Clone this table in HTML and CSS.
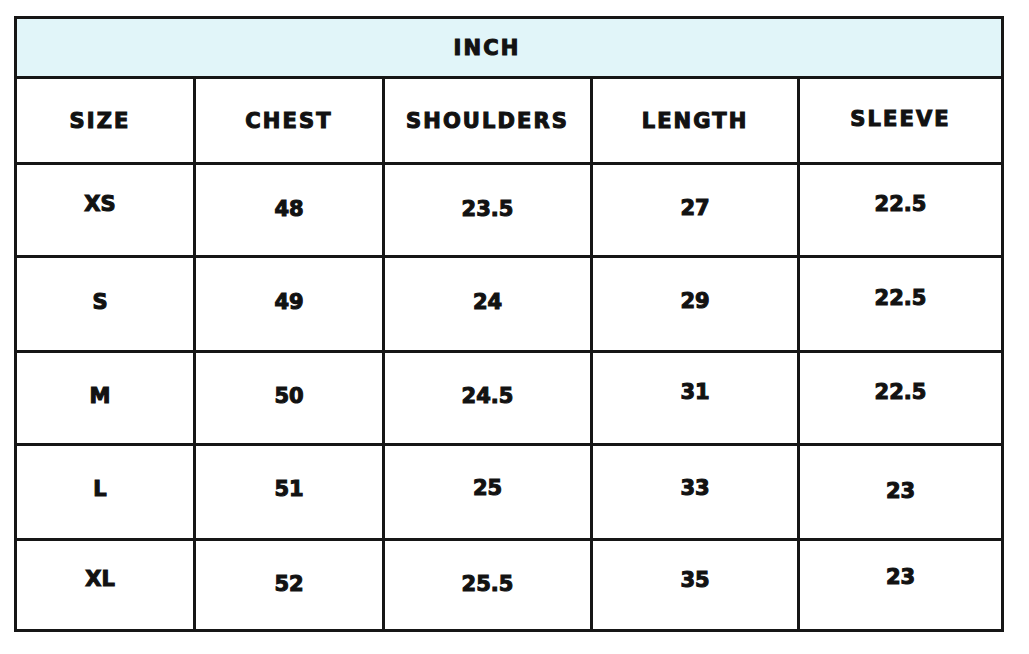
FILE: index.html
```html
<!DOCTYPE html>
<html lang="en">
<head>
<meta charset="utf-8">
<title>Size Chart</title>
<link rel="stylesheet" href="styles.css">
</head>
<body>
<div class="chart">
  <div class="cell head title">INCH</div>

  <div class="cell head first">SIZE</div>
  <div class="cell head">CHEST</div>
  <div class="cell head">SHOULDERS</div>
  <div class="cell head">LENGTH</div>
  <div class="cell head up2">SLEEVE</div>

  <div class="cell first up6">XS</div>
  <div class="cell up1">48</div>
  <div class="cell up1">23.5</div>
  <div class="cell up2">27</div>
  <div class="cell up6">22.5</div>

  <div class="cell first up2">S</div>
  <div class="cell up2">49</div>
  <div class="cell up2">24</div>
  <div class="cell up3">29</div>
  <div class="cell up6">22.5</div>

  <div class="cell first up2">M</div>
  <div class="cell up2">50</div>
  <div class="cell up2">24.5</div>
  <div class="cell up6">31</div>
  <div class="cell up6">22.5</div>

  <div class="cell first up3">L</div>
  <div class="cell up3">51</div>
  <div class="cell up4">25</div>
  <div class="cell up4">33</div>
  <div class="cell up1">23</div>

  <div class="cell first up6">XL</div>
  <div class="cell up1">52</div>
  <div class="cell up1">25.5</div>
  <div class="cell up5">35</div>
  <div class="cell up8">23</div>
</div>
</body>
</html>
```

FILE: styles.css
```css
html, body {
  margin: 0;
  padding: 0;
  background: #ffffff;
}

body {
  padding: 16px 0 0 14px;
  font-family: "DejaVu Sans", "Liberation Sans", sans-serif;
}

.chart {
  display: grid;
  grid-template-columns: 176px 186px 205px 204px 201px;
  grid-template-rows: 57px 83px 90px 92px 90px 92px 88px;
  gap: 3px;
  padding: 3px;
  width: 990px;
  height: 616px;
  box-sizing: border-box;
  background: #161616;
}

.cell {
  background: #ffffff;
  display: flex;
  align-items: center;
  justify-content: center;
  font-weight: 700;
  font-size: 21px;
  letter-spacing: 0;
  color: #121212;
  -webkit-text-stroke: 1.1px #121212;
  box-sizing: border-box;
}

.head {
  letter-spacing: 2.1px;
}

.title {
  grid-column: 1 / -1;
  background: #e1f5f9;
  padding-right: 44px;
}

.first {
  padding-right: 10px;
}

.up1 { padding-bottom: 2px; }
.up2 { padding-bottom: 4px; }
.up3 { padding-bottom: 6px; }
.up4 { padding-bottom: 8px; }
.up5 { padding-bottom: 10px; }
.up6 { padding-bottom: 12px; }
.up8 { padding-bottom: 16px; }
```
